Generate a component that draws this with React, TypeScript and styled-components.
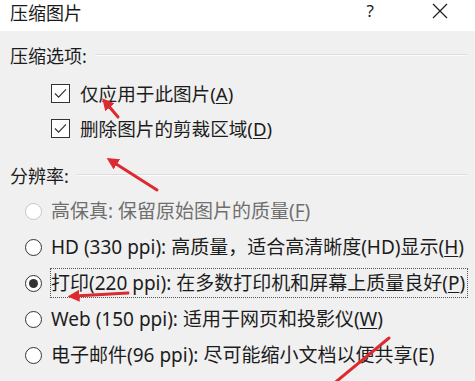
import styled, { createGlobalStyle } from 'styled-components'

type Choice = {
  label: string
  key: string
  rest?: string
  checked?: boolean
  disabled?: boolean
  focused?: boolean
}

const options: Choice[] = [
  { label: '仅应用于此图片(', key: 'A', rest: ')', checked: true },
  { label: '删除图片的剪裁区域(', key: 'D', rest: ')', checked: true },
]

const resolutions: Choice[] = [
  { label: '高保真: 保留原始图片的质量(', key: 'F', rest: ')', disabled: true },
  { label: 'HD (330 ppi): 高质量，适合高清晰度(HD)显示(', key: 'H', rest: ')' },
  {
    label: '打印(220 ppi): 在多数打印机和屏幕上质量良好(',
    key: 'P',
    rest: ')',
    checked: true,
    focused: true,
  },
  { label: 'Web (150 ppi): 适用于网页和投影仪(', key: 'W', rest: ')' },
  { label: '电子邮件(96 ppi): 尽可能缩小文档以便共享(E)', key: '' },
]

export default function App() {
  return (
    <Dialog>
      <GlobalStyle />
      <TitleBar>
        <Title>压缩图片</Title>
        <TitleButtons>
          <HelpButton>?</HelpButton>
          <CloseButton>
            <svg width="16" height="16" viewBox="0 0 16 16">
              <path d="M1 1 L15 15 M15 1 L1 15" stroke="#222" strokeWidth="1.3" />
            </svg>
          </CloseButton>
        </TitleButtons>
      </TitleBar>

      <Body>
        <GroupHeader>
          <GroupLabel>压缩选项:</GroupLabel>
          <Rule />
        </GroupHeader>
        {options.map((o) => (
          <CheckRow key={o.key}>
            <CheckBox>
              <svg width="13" height="11" viewBox="0 0 13 11">
                <path d="M1 5.5 L4.6 9.2 L12 1.3" fill="none" stroke="#333" strokeWidth="1.2" />
              </svg>
            </CheckBox>
            <OptionText $size={18.6}>
              {o.label}
              <Key>{o.key}</Key>
              {o.rest}
            </OptionText>
          </CheckRow>
        ))}

        <GroupHeader $top={14}>
          <GroupLabel>分辨率:</GroupLabel>
          <Rule />
        </GroupHeader>
        <RadioList>
          {resolutions.map((r) => (
            <RadioRow key={r.label}>
              <Radio $disabled={r.disabled} $checked={r.checked} />
              <OptionText $size={19} $disabled={r.disabled} $focused={r.focused}>
                {r.label}
                {r.key && <Key>{r.key}</Key>}
                {r.rest}
              </OptionText>
            </RadioRow>
          ))}
        </RadioList>
      </Body>

      <Annotations width="475" height="381" viewBox="0 0 475 381">
        <defs>
          <marker id="head" markerWidth="4" markerHeight="4" refX="1.5" refY="2" orient="auto">
            <path d="M0 0 L4 2 L0 4 Z" fill="#dc2a30" />
          </marker>
        </defs>
        <g stroke="#dc2a30" strokeWidth="3" strokeLinecap="round" fill="none">
          <line x1="118" y1="117" x2="107" y2="104" markerEnd="url(#head)" />
          <line x1="157" y1="190" x2="113" y2="162" markerEnd="url(#head)" />
          <line x1="128" y1="293" x2="75" y2="296" markerEnd="url(#head)" />
          <line x1="389" y1="338" x2="326" y2="390" />
        </g>
      </Annotations>
    </Dialog>
  )
}

const GlobalStyle = createGlobalStyle`
  html, body {
    margin: 0;
    background: #f0f0f0;
    overflow: hidden;
  }
`

const Dialog = styled.div`
  position: relative;
  width: 475px;
  height: 381px;
  overflow: hidden;
  background: #f0f0f0;
  color: #1c1c1c;
  font-family: 'Noto Sans', 'Noto Sans CJK SC', sans-serif;
`

const TitleBar = styled.div`
  height: 31px;
  background: #ffffff;
  display: flex;
  align-items: center;
  justify-content: space-between;
  padding: 0 27px 0 10px;
`

const Title = styled.div`
  font-family: 'Noto Sans CJK SC', sans-serif;
  font-size: 18px;
  line-height: 22px;
  margin-top: -8px;
  color: #1a1a1a;
`

const TitleButtons = styled.div`
  display: flex;
  align-items: center;
  gap: 58px;
  margin-top: -9px;
`

const HelpButton = styled.span`
  font-family: 'Noto Sans', sans-serif;
  font-size: 17px;
  line-height: 20px;
  color: #222;
`

const CloseButton = styled.span`
  display: flex;
`

const Body = styled.div`
  padding: 9px 8px 0 10px;
`

const GroupHeader = styled.div<{ $top?: number }>`
  display: flex;
  align-items: center;
  gap: 8px;
  height: 30px;
  margin-top: ${(p) => p.$top ?? 0}px;
  margin-bottom: 6px;
`

const GroupLabel = styled.span`
  font-size: 18px;
  white-space: nowrap;
  color: #1c1c1c;
`

const Rule = styled.div`
  flex: 1;
  height: 0;
  border-top: 1px solid #dcdcdc;
  border-bottom: 1px solid #fbfbfb;
`

const CheckRow = styled.div`
  display: flex;
  align-items: center;
  gap: 10px;
  height: 35px;
  padding-left: 41px;
`

const CheckBox = styled.span`
  width: 17px;
  height: 17px;
  border: 1.5px solid #333;
  background: #fff;
  display: flex;
  align-items: center;
  justify-content: center;
`

const OptionText = styled.span<{ $size: number; $disabled?: boolean; $focused?: boolean }>`
  font-size: ${(p) => p.$size}px;
  line-height: 28px;
  white-space: nowrap;
  color: ${(p) => (p.$disabled ? '#6f6f6f' : '#1c1c1c')};
  outline: ${(p) => (p.$focused ? '1px dotted #555' : 'none')};
  outline-offset: 0;
  padding-right: ${(p) => (p.$focused ? '2px' : '0')};
`

const Key = styled.span`
  text-decoration: underline;
  text-underline-offset: 2px;
  text-decoration-thickness: 1px;
`

const RadioList = styled.div`
  margin-top: -3px;
`

const RadioRow = styled.div`
  display: flex;
  align-items: center;
  gap: 9px;
  height: 36px;
  padding-left: 15px;
`

const Radio = styled.span<{ $disabled?: boolean; $checked?: boolean }>`
  position: relative;
  width: 15px;
  height: 15px;
  flex: none;
  border-radius: 50%;
  border: 1.5px solid ${(p) => (p.$disabled ? '#c6c6c6' : '#333')};
  background: #fff;

  &::after {
    content: '';
    display: ${(p) => (p.$checked ? 'block' : 'none')};
    position: absolute;
    left: 3px;
    top: 3px;
    width: 9px;
    height: 9px;
    border-radius: 50%;
    background: #333;
  }
`

const Annotations = styled.svg`
  position: absolute;
  left: 0;
  top: 0;
  pointer-events: none;
`
